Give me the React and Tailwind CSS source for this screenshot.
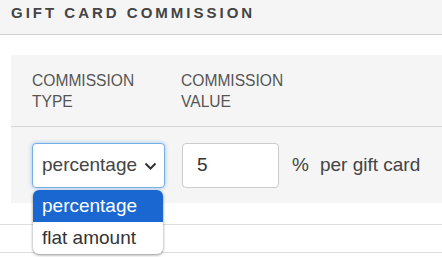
import React from 'react';

const App = () => {
    return (
        <div className="relative w-[442px] h-[257px] overflow-hidden bg-white font-['Liberation_Sans',Arial,sans-serif]">
            <div className="h-[35px] bg-[#f5f5f5] border-b border-[#cfcfcf] px-[11px] pt-[3px]">
                <h2 className="text-[15px] leading-[20px] font-bold tracking-[3px] text-[#444]">GIFT CARD COMMISSION</h2>
            </div>

            <div className="mt-[20px] ml-[11px] bg-[#f5f5f5]">
                <div className="flex border-b border-[#d6d6d6] pt-[15px] pb-[14px] text-[15.6px] leading-[21px] text-[#555]">
                    <div className="w-[170px] pl-[21px]">COMMISSION<br />TYPE</div>
                    <div>COMMISSION<br />VALUE</div>
                </div>
                <div className="flex items-center pt-[16px] pb-[15px] pl-[21px] text-[19px] text-[#444]">
                    <div className="relative flex items-center justify-between w-[133px] h-[45px] rounded-[4px] border border-[#74aee6] bg-white pl-[9px] pr-[7px] shadow-[0_0_4px_rgba(102,165,230,0.6)]">
                        <span>percentage</span>
                        <svg width="13" height="8" viewBox="0 0 13 8" fill="none" stroke="#333" strokeWidth="2">
                            <path d="M1.5 1.5l5 5 5-5" />
                        </svg>
                    </div>
                    <div className="ml-[17px] w-[97px] h-[45px] rounded-[4px] border border-[#ccc] bg-white pl-[14px] flex items-center text-[#333]">5</div>
                    <span className="ml-[13px]">%</span>
                    <span className="ml-[11px]">per gift card</span>
                </div>
            </div>

            <div className="mt-[21px] border-t border-[#dedede] h-[28px]" />
            <div className="border-t border-[#dedede]" />

            <div className="absolute left-[33px] top-[190px] w-[130px] h-[64px] overflow-hidden rounded-[6px] bg-white shadow-[0_1px_3px_rgba(0,0,0,0.45)] text-[19px]">
                <div className="h-[32px] bg-[#1a67d2] text-white pl-[9px] flex items-center">percentage</div>
                <div className="h-[32px] text-[#333] pl-[9px] flex items-center">flat amount</div>
            </div>
        </div>
    );
};

export default App;
